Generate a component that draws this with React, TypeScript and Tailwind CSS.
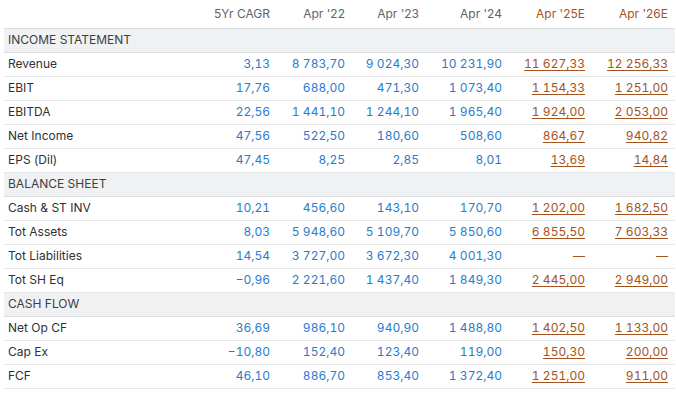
const COLS = ["5Yr CAGR", "Apr '22", "Apr '23", "Apr '24", "Apr '25E", "Apr '26E"];

type Row = { label: string; values: string[] };
type Section = { title: string; rows: Row[] };

const SECTIONS: Section[] = [
  {
    title: "INCOME STATEMENT",
    rows: [
      { label: "Revenue", values: ["3,13", "8 783,70", "9 024,30", "10 231,90", "11 627,33", "12 256,33"] },
      { label: "EBIT", values: ["17,76", "688,00", "471,30", "1 073,40", "1 154,33", "1 251,00"] },
      { label: "EBITDA", values: ["22,56", "1 441,10", "1 244,10", "1 965,40", "1 924,00", "2 053,00"] },
      { label: "Net Income", values: ["47,56", "522,50", "180,60", "508,60", "864,67", "940,82"] },
      { label: "EPS (Dil)", values: ["47,45", "8,25", "2,85", "8,01", "13,69", "14,84"] },
    ],
  },
  {
    title: "BALANCE SHEET",
    rows: [
      { label: "Cash & ST INV", values: ["10,21", "456,60", "143,10", "170,70", "1 202,00", "1 682,50"] },
      { label: "Tot Assets", values: ["8,03", "5 948,60", "5 109,70", "5 850,60", "6 855,50", "7 603,33"] },
      { label: "Tot Liabilities", values: ["14,54", "3 727,00", "3 672,30", "4 001,30", "—", "—"] },
      { label: "Tot SH Eq", values: ["−0,96", "2 221,60", "1 437,40", "1 849,30", "2 445,00", "2 949,00"] },
    ],
  },
  {
    title: "CASH FLOW",
    rows: [
      { label: "Net Op CF", values: ["36,69", "986,10", "940,90", "1 488,80", "1 402,50", "1 133,00"] },
      { label: "Cap Ex", values: ["−10,80", "152,40", "123,40", "119,00", "150,30", "200,00"] },
      { label: "FCF", values: ["46,10", "886,70", "853,40", "1 372,40", "1 251,00", "911,00"] },
    ],
  },
];

// 5Yr CAGR, Apr '22 ... Apr '26E
const WIDTHS = ["w-[83px]", "w-[75px]", "w-[74px]", "w-[83px]", "w-[83px]", "w-[83px]"];

function Cell({ value, index }: { value: string; index: number }) {
  const estimate = index >= 4;
  if (!estimate) {
    return <td className="pr-[7px] text-right tabular-nums text-[#2b7bcb]">{value}</td>;
  }
  return (
    <td className="pr-[7px] text-right tabular-nums text-[#a5521c]">
      {value === "—" ? value : <span className="underline underline-offset-2">{value}</span>}
    </td>
  );
}

export default function App() {
  return (
    <div className="h-[395px] w-[676px] bg-white pl-1 font-['Inter',sans-serif] text-[12px]">
      <table className="w-[671px] table-fixed border-collapse">
        <thead>
          <tr className="h-[28px] border-b border-[#dcdee0] text-[#5f6368]">
            <th className="w-[190px]" />
            {COLS.map((col, i) => (
              <th key={col} className={`${WIDTHS[i]} pr-[7px] text-right font-normal`}>
                {col === "Apr '25E" || col === "Apr '26E" ? (
                  <span className="text-[#a5521c]">{col}</span>
                ) : (
                  col
                )}
              </th>
            ))}
          </tr>
        </thead>
        <tbody>
          {SECTIONS.map((section) => (
            <>
              <tr key={section.title} className="h-[24px] border-b border-[#dcdee0] bg-[#f0f1f3]">
                <td colSpan={7} className="pl-1 text-[#3c4043]">
                  {section.title}
                </td>
              </tr>
              {section.rows.map((row) => (
                <tr key={row.label} className="h-[24px] border-b border-[#e6e7e9]">
                  <td className="pl-1 text-[#2f3133]">{row.label}</td>
                  {row.values.map((v, i) => (
                    <Cell key={i} value={v} index={i} />
                  ))}
                </tr>
              ))}
            </>
          ))}
        </tbody>
      </table>
    </div>
  );
}
